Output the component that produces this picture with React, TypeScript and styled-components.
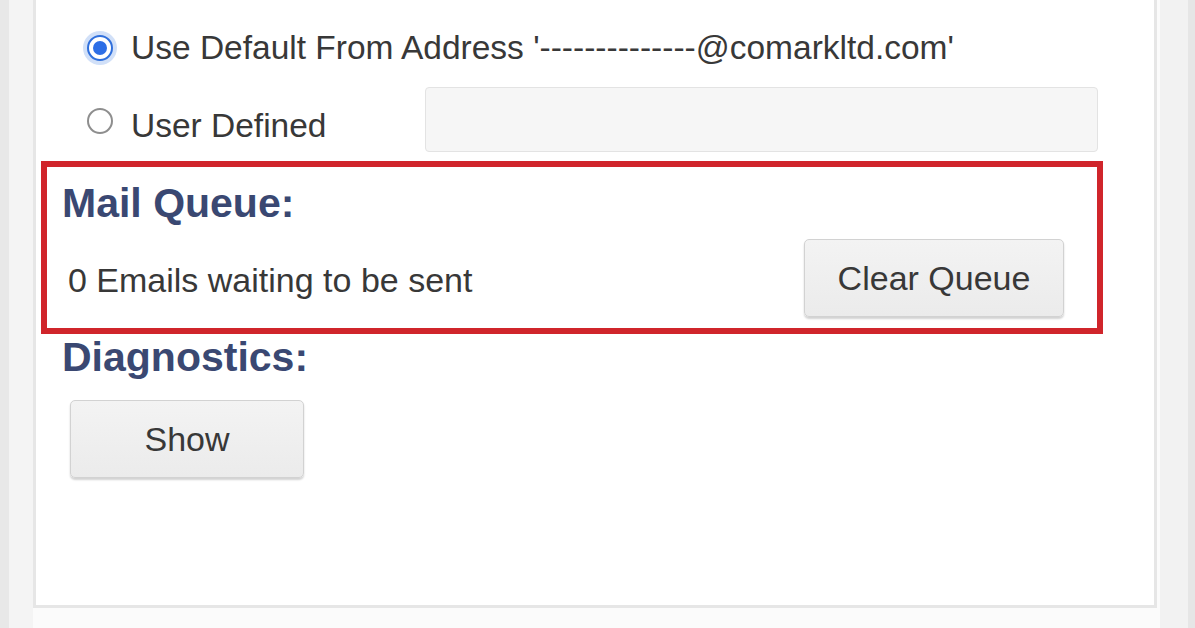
import React from "react";
import styled, { createGlobalStyle } from "styled-components";

const Global = createGlobalStyle`
  html, body { margin: 0; padding: 0; }
  body {
    font-family: "Liberation Sans", Arial, sans-serif;
    background: #fbfbfb;
    overflow: hidden;
  }
`;

const Page = styled.div`
  display: flex;
  width: 1195px;
  height: 628px;
`;

const Rail = styled.div<{ $w: number; $bg: string }>`
  width: ${(p) => p.$w}px;
  flex: none;
  background: ${(p) => p.$bg};
`;

const Column = styled.div`
  flex: 1;
  display: flex;
  flex-direction: column;
  background: #fbfbfb;
`;

const Panel = styled.div`
  height: 608px;
  box-sizing: border-box;
  margin-right: 3px;
  background: #ffffff;
  border: 3px solid #e6e6e6;
  border-top: none;
  padding: 24px 51px 0 5px;
  display: flex;
  flex-direction: column;
`;

const OptionRow = styled.div<{ $h?: number; $mt?: number }>`
  display: flex;
  align-items: center;
  padding: 0 5px 0 46px;
  height: ${(p) => p.$h ?? 48}px;
  margin-top: ${(p) => p.$mt ?? 0}px;
`;

const Radio = styled.span<{ $checked?: boolean; $mt?: number }>`
  width: 26px;
  height: 26px;
  flex: none;
  box-sizing: border-box;
  border-radius: 50%;
  display: flex;
  align-items: center;
  justify-content: center;
  background: #fff;
  margin-top: ${(p) => p.$mt ?? 0}px;
  border: ${(p) => (p.$checked ? "2px solid #2f6fdc" : "2px solid #8e8e8e")};
  box-shadow: ${(p) =>
    p.$checked ? "0 0 0 4px rgba(90, 145, 230, 0.28)" : "none"};
  &::after {
    content: "";
    display: ${(p) => (p.$checked ? "block" : "none")};
    width: 14px;
    height: 14px;
    border-radius: 50%;
    background: #2d6ee6;
  }
`;

const Label = styled.span<{ $w?: number; $mt?: number }>`
  margin-left: 18px;
  font-size: 33.5px;
  line-height: 38px;
  color: #383838;
  white-space: nowrap;
  width: ${(p) => (p.$w ? `${p.$w}px` : "auto")};
  margin-top: ${(p) => p.$mt ?? 0}px;
  flex: none;
`;

const TextInput = styled.div`
  flex: 1;
  height: 65px;
  box-sizing: border-box;
  background: #f6f6f6;
  border: 1.5px solid #e3e3e3;
  border-radius: 4px;
`;

const Highlight = styled.div`
  margin-top: 9px;
  border: 6px solid #d0252b;
  padding: 13px 33px 11px 15px;
  display: flex;
  flex-direction: column;
`;

const Heading = styled.div<{ $pl?: number }>`
  font-size: 41px;
  line-height: 47px;
  font-weight: bold;
  color: #3a4872;
  padding-left: ${(p) => p.$pl ?? 0}px;
`;

const QueueRow = styled.div`
  margin-top: 12px;
  display: flex;
  align-items: center;
  justify-content: space-between;
  padding-left: 6px;
`;

const BodyText = styled.span`
  font-size: 34px;
  line-height: 38px;
  color: #383838;
  margin-top: 4px;
`;

const Button = styled.button<{ $w: number; $ml?: number }>`
  width: ${(p) => p.$w}px;
  height: 78px;
  margin-left: ${(p) => p.$ml ?? 0}px;
  flex: none;
  box-sizing: border-box;
  font-family: "Liberation Sans", Arial, sans-serif;
  font-size: 34px;
  color: #383838;
  background: linear-gradient(#f3f3f3, #ebebeb);
  border: 1.5px solid #d2d2d2;
  border-radius: 5px;
  box-shadow: 0 2px 2px rgba(0, 0, 0, 0.18);
  padding: 0;
  cursor: pointer;
`;

const DiagBlock = styled.div`
  display: flex;
  flex-direction: column;
  align-items: flex-start;
`;

const ButtonWrap = styled.div`
  margin-top: 19px;
`;

export default function App() {
  return (
    <>
      <Global />
      <Page>
        <Rail $w={9} $bg="#e8e8e8" />
        <Rail $w={24} $bg="#f4f4f4" />
        <Column>
          <Panel>
            <OptionRow>
              <Radio $checked />
              <Label>Use Default From Address '--------------@comarkltd.com'</Label>
            </OptionRow>
            <OptionRow $h={65} $mt={15}>
              <Radio $mt={3} />
              <Label $w={294} $mt={12}>User Defined</Label>
              <TextInput />
            </OptionRow>
            <Highlight>
              <Heading>Mail Queue:</Heading>
              <QueueRow>
                <BodyText>0 Emails waiting to be sent</BodyText>
                <Button $w={260}>Clear Queue</Button>
              </QueueRow>
            </Highlight>
            <DiagBlock>
              <Heading $pl={21}>Diagnostics:</Heading>
              <ButtonWrap>
                <Button $w={234} $ml={29}>Show</Button>
              </ButtonWrap>
            </DiagBlock>
          </Panel>
        </Column>
        <Rail $w={28} $bg="#f2f2f2" />
        <Rail $w={7} $bg="#e6e6e6" />
      </Page>
    </>
  );
}
